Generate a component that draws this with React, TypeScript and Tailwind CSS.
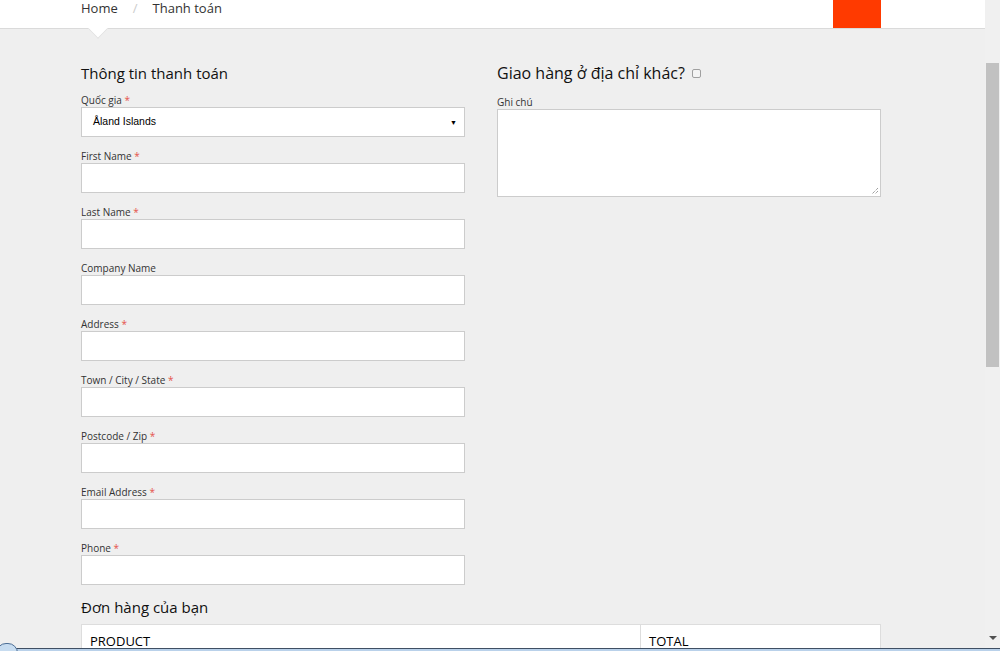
import React from "react";

const font = { fontFamily: '"Open Sans", "Noto Sans", sans-serif' };

function Field({ label, required = true }: { label: string; required?: boolean }) {
  return (
    <div className="flex flex-col">
      <label className="text-[10px] leading-[14px] text-[#333]">
        {label}
        {required && <span className="text-[#e5534b]"> *</span>}
      </label>
      <input className="h-[30px] w-full border border-[#ccc] bg-white outline-none" />
    </div>
  );
}

export default function App() {
  return (
    <div
      className="relative flex h-[651px] w-[1000px] overflow-hidden bg-[#efefef] text-[#222]"
      style={font}
    >
      <div className="flex w-[985px] flex-col">
        {/* Header */}
        <div className="relative h-[29px] shrink-0 border-b border-[#dadada] bg-white">
          <div className="ml-[81px] flex h-[28px] w-[800px] items-start justify-between">
            <div className="mt-[2px] flex items-center gap-[15px] text-[13px] leading-[12px] text-[#333]">
              <span>Home</span>
              <span className="text-[#ccc]">/</span>
              <span>Thanh toán</span>
            </div>
            <div className="h-[28px] w-[48px] bg-[#ff3a00]" />
          </div>
          <div className="absolute left-[91px] top-[22px] h-[14px] w-[14px] rotate-45 border-b border-r border-[#e2e2e2] bg-white" />
        </div>

        {/* Content */}
        <div className="ml-[81px] w-[800px] pt-[34px]">
          <div className="flex gap-[32px]">
            <div className="flex w-[384px] flex-col">
              <h3 className="mb-[10px] text-[15px] leading-[20px] text-[#111]">Thông tin thanh toán</h3>
              <div className="flex flex-col gap-[12px]">
                <div className="flex flex-col">
                  <label className="text-[10px] leading-[14px] text-[#333]">
                    Quốc gia<span className="text-[#e5534b]"> *</span>
                  </label>
                  <div className="flex h-[30px] items-center justify-between border border-[#ccc] bg-white pl-[11px] pr-[7px]">
                    <span
                      className="text-[10.5px] text-black"
                      style={{ fontFamily: '"Liberation Sans", Arial, sans-serif' }}
                    >
                      Åland Islands
                    </span>
                    <span className="text-[7px] leading-none text-black">▼</span>
                  </div>
                </div>
                <Field label="First Name" />
                <Field label="Last Name" />
                <Field label="Company Name" required={false} />
                <Field label="Address" />
                <Field label="Town / City / State" />
                <Field label="Postcode / Zip" />
                <Field label="Email Address" />
                <Field label="Phone" />
              </div>
            </div>
            <div className="flex w-[384px] flex-col">
              <div className="mb-[12px] flex items-center gap-[7px]">
                <h3 className="text-[16px] leading-[20px] text-[#111]">Giao hàng ở địa chỉ khác?</h3>
                <div className="mt-[1px] h-[9px] w-[9px] rounded-[2px] border border-[#a0a0a0] bg-[#f4f4f4]" />
              </div>
              <label className="text-[10px] leading-[14px] text-[#333]">Ghi chú</label>
              <div className="relative h-[88px] w-full border border-[#ccc] bg-white">
                <svg className="absolute bottom-[1px] right-[1px]" width="8" height="8" viewBox="0 0 8 8">
                  <path d="M7 1 L1 7 M7 4 L4 7" stroke="#777" strokeWidth="1" strokeDasharray="1 1" />
                </svg>
              </div>
            </div>
          </div>

          <h3 className="mt-[11px] text-[15px] leading-[22px] text-[#111]">Đơn hàng của bạn</h3>
          <div className="mt-[6px] flex border border-[#ddd] bg-white">
            <div className="w-[559px] border-r border-[#ddd] px-[8px] pt-[6px] text-[13px] leading-[20px] text-black">
              PRODUCT
            </div>
            <div className="flex-1 px-[8px] pt-[6px] text-[13px] leading-[20px] text-black">TOTAL</div>
          </div>
        </div>
      </div>

      {/* Scrollbar */}
      <div className="relative w-[15px] shrink-0 bg-[#f0f0f0]">
        <div className="absolute left-[1px] top-[63px] h-[304px] w-[13px] bg-[#c1c1c1]" />
        <div className="absolute left-[4px] top-[636px] h-0 w-0 border-l-[4px] border-r-[4px] border-t-[4px] border-l-transparent border-r-transparent border-t-[#505050]" />
      </div>

      {/* Taskbar edge */}
      <div className="absolute bottom-0 left-0 h-[3px] w-full border-t border-[#3f4f63] bg-[#b9d1ea]" />
      <div className="absolute left-[-4px] top-[643px] h-[20px] w-[22px] rounded-full border border-[#4d6f96] bg-[#c7dcf0]" />
    </div>
  );
}
